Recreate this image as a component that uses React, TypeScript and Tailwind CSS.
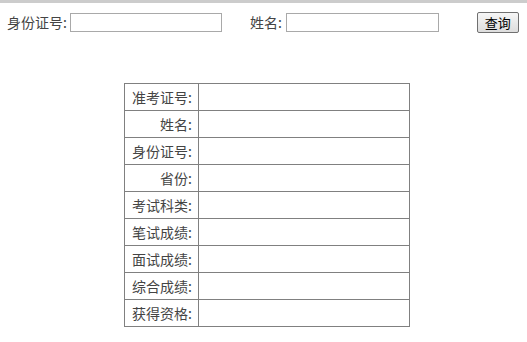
import React from 'react';

const rows = ['准考证号:', '姓名:', '身份证号:', '省份:', '考试科类:', '笔试成绩:', '面试成绩:', '综合成绩:', '获得资格:'];

export default function App() {
  return (
    <div
      className="w-[527px] h-[342px] bg-white border-t-[3px] border-[#cccccc] text-[14px] text-[#444444]"
      style={{ fontFamily: '"Noto Sans CJK SC", "Liberation Sans", sans-serif' }}
    >
      <div className="flex items-center h-[30px] pt-[9px]">
        <span className="ml-[7px] leading-[19px]">身份证号:</span>
        <input className="ml-[3px] w-[152px] h-[19px] border border-[#a9a9a9] bg-white" />
        <span className="ml-[28px] leading-[19px]">姓名:</span>
        <input className="ml-[4px] w-[153px] h-[19px] border border-[#a9a9a9] bg-white" />
        <button className="ml-[38px] w-[42px] h-[21px] border border-[#707070] rounded-[2px] bg-gradient-to-b from-[#f6f6f6] to-[#dddddd] text-[13px] text-black leading-none">
          查询
        </button>
      </div>
      <table className="ml-[124px] mt-[50px] border-collapse">
        <tbody>
          {rows.map((r) => (
            <tr key={r} className="h-[27px]">
              <td className="w-[74px] border border-[#808080] text-right pr-[6px] p-0 leading-none">{r}</td>
              <td className="w-[211px] border border-[#808080] p-0"></td>
            </tr>
          ))}
        </tbody>
      </table>
    </div>
  );
}
